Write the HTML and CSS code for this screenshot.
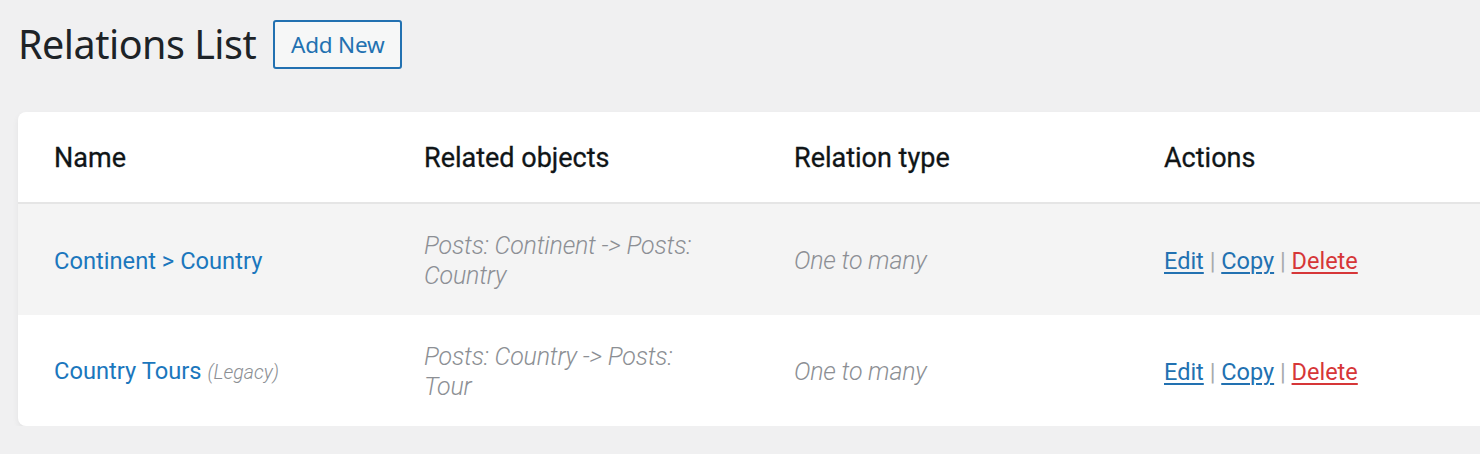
FILE: index.html
```html
<!DOCTYPE html>
<html lang="en">
<head>
<meta charset="utf-8">
<title>Relations List</title>
<link rel="stylesheet" href="styles.css">
</head>
<body>
<div class="page">
  <div class="heading">
    <h1 class="title">Relations List</h1>
    <a class="btn-add" href="#">Add New</a>
  </div>
  <div class="card">
    <table class="rel-table">
      <thead>
        <tr>
          <th>Name</th>
          <th>Related objects</th>
          <th>Relation type</th>
          <th>Actions</th>
        </tr>
      </thead>
      <tbody>
        <tr class="striped">
          <td><a class="name-link" href="#">Continent &gt; Country</a></td>
          <td class="muted">Posts: Continent -&gt; Posts:<br>Country</td>
          <td class="muted">One to many</td>
          <td class="actions"><a href="#">Edit</a> <span class="sep">|</span> <a href="#">Copy</a> <span class="sep">|</span> <a class="del" href="#">Delete</a></td>
        </tr>
        <tr>
          <td><a class="name-link" href="#">Country Tours</a> <span class="legacy">(Legacy)</span></td>
          <td class="muted">Posts: Country -&gt; Posts:<br>Tour</td>
          <td class="muted">One to many</td>
          <td class="actions"><a href="#">Edit</a> <span class="sep">|</span> <a href="#">Copy</a> <span class="sep">|</span> <a class="del" href="#">Delete</a></td>
        </tr>
      </tbody>
    </table>
  </div>
</div>
</body>
</html>
```
FILE: styles.css
```css
html, body {
  margin: 0;
  padding: 0;
  background: #f0f0f1;
  overflow: hidden;
}
.page {
  padding: 20px 0 0 18px;
  width: 1520px;
}
.heading {
  display: flex;
  align-items: center;
  gap: 17px;
  height: 49px;
}
.title {
  margin: 0;
  font-family: "Noto Sans", "Open Sans", sans-serif;
  font-weight: 400;
  font-size: 39.5px;
  color: #1d2327;
  letter-spacing: -0.5px;
  line-height: 49px;
}
.btn-add {
  box-sizing: border-box;
  height: 49px;
  width: 129px;
  display: flex;
  align-items: center;
  justify-content: center;
  border: 2px solid #2271b1;
  border-radius: 3px;
  background: #f6f7f7;
  color: #2271b1;
  text-decoration: none;
  font-family: "Noto Sans", "Open Sans", sans-serif;
  font-size: 22.5px;
  letter-spacing: -0.2px;
}
.card {
  margin-top: 43px;
  background: #fff;
  border-radius: 8px 0 0 8px;
  box-shadow: 0 3px 6px rgba(0,0,0,0.06);
  overflow: hidden;
}
.rel-table {
  border-collapse: collapse;
  font-family: Roboto, "Liberation Sans", sans-serif;
}
.rel-table th, .rel-table td {
  width: 334px;
  padding: 2px 0 0 36px;
  text-align: left;
  vertical-align: middle;
}
.rel-table th {
  height: 88px;
  font-size: 27px;
  font-weight: 400;
  color: #101517;
  border-bottom: 2px solid #e5e5e5;
  -webkit-text-stroke: 0.3px #101517;
}
.rel-table td {
  height: 109px;
  font-size: 24px;
  line-height: 30px;
}
.striped td {
  background: #f4f4f4;
}
.name-link {
  color: #1b77bd;
  text-decoration: none;
  font-size: 23.7px;
}
.legacy {
  font-style: italic;
  font-weight: 300;
  font-size: 19.5px;
  color: #8c8f94;
}
.muted {
  font-style: italic;
  font-weight: 300;
  color: #8c8f94;
  letter-spacing: -0.2px;
}
.rel-table td.muted {
  font-size: 25px;
}
.rel-table td.actions {
  font-size: 23.5px;
}
.actions a {
  color: #2271b1;
  text-decoration: underline;
  text-underline-offset: 3px;
  text-decoration-thickness: 2px;
}
.actions a.del {
  color: #d63638;
}
.sep {
  color: #a7aaad;
}
```
